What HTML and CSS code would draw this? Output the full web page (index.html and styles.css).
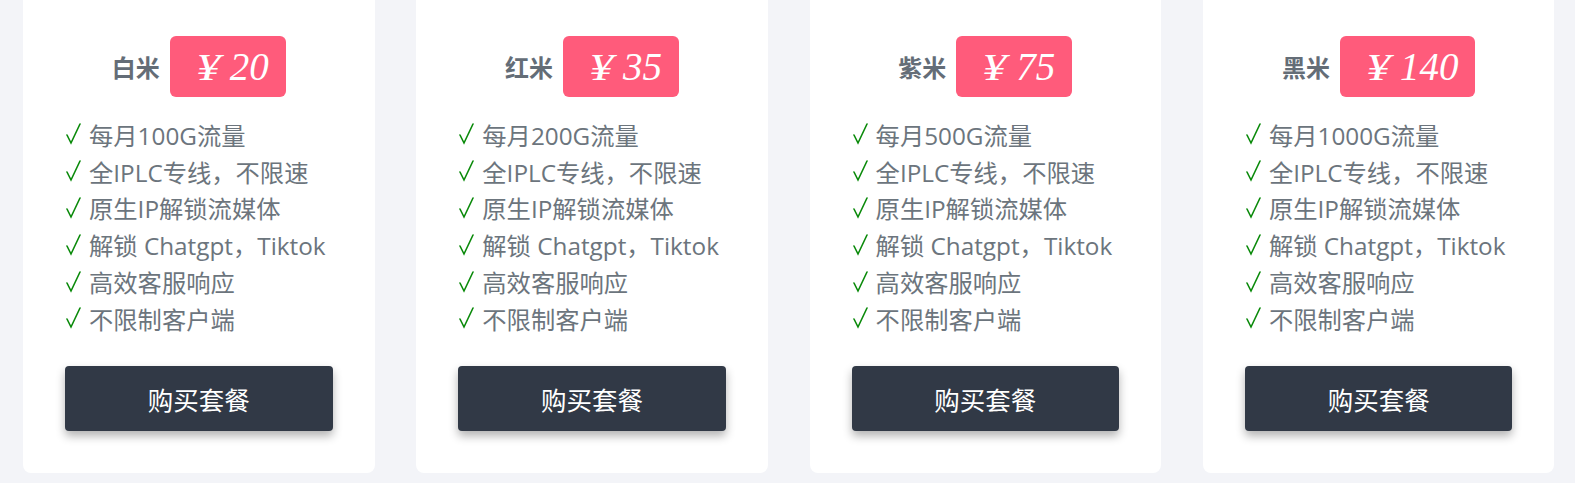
FILE: index.html
```html
<!DOCTYPE html>
<html lang="zh-CN">
<head>
<meta charset="utf-8">
<title>套餐</title>
<link rel="stylesheet" href="styles.css">
</head>
<body>
<main class="plans">
  <section class="card">
    <div class="head"><h3 class="name">白米</h3><div class="price"><span class="yen">¥</span>20</div></div>
    <ul class="features">
      <li><svg class="check" viewBox="0 0 15 22"><polyline points="1,12 5,20 14,1"/></svg>每月100G流量</li>
      <li><svg class="check" viewBox="0 0 15 22"><polyline points="1,12 5,20 14,1"/></svg>全IPLC专线，不限速</li>
      <li><svg class="check" viewBox="0 0 15 22"><polyline points="1,12 5,20 14,1"/></svg>原生IP解锁流媒体</li>
      <li><svg class="check" viewBox="0 0 15 22"><polyline points="1,12 5,20 14,1"/></svg>解锁 Chatgpt，Tiktok</li>
      <li><svg class="check" viewBox="0 0 15 22"><polyline points="1,12 5,20 14,1"/></svg>高效客服响应</li>
      <li><svg class="check" viewBox="0 0 15 22"><polyline points="1,12 5,20 14,1"/></svg>不限制客户端</li>
    </ul>
    <button class="buy">购买套餐</button>
  </section>
  <section class="card">
    <div class="head"><h3 class="name">红米</h3><div class="price"><span class="yen">¥</span>35</div></div>
    <ul class="features">
      <li><svg class="check" viewBox="0 0 15 22"><polyline points="1,12 5,20 14,1"/></svg>每月200G流量</li>
      <li><svg class="check" viewBox="0 0 15 22"><polyline points="1,12 5,20 14,1"/></svg>全IPLC专线，不限速</li>
      <li><svg class="check" viewBox="0 0 15 22"><polyline points="1,12 5,20 14,1"/></svg>原生IP解锁流媒体</li>
      <li><svg class="check" viewBox="0 0 15 22"><polyline points="1,12 5,20 14,1"/></svg>解锁 Chatgpt，Tiktok</li>
      <li><svg class="check" viewBox="0 0 15 22"><polyline points="1,12 5,20 14,1"/></svg>高效客服响应</li>
      <li><svg class="check" viewBox="0 0 15 22"><polyline points="1,12 5,20 14,1"/></svg>不限制客户端</li>
    </ul>
    <button class="buy">购买套餐</button>
  </section>
  <section class="card">
    <div class="head"><h3 class="name">紫米</h3><div class="price"><span class="yen">¥</span>75</div></div>
    <ul class="features">
      <li><svg class="check" viewBox="0 0 15 22"><polyline points="1,12 5,20 14,1"/></svg>每月500G流量</li>
      <li><svg class="check" viewBox="0 0 15 22"><polyline points="1,12 5,20 14,1"/></svg>全IPLC专线，不限速</li>
      <li><svg class="check" viewBox="0 0 15 22"><polyline points="1,12 5,20 14,1"/></svg>原生IP解锁流媒体</li>
      <li><svg class="check" viewBox="0 0 15 22"><polyline points="1,12 5,20 14,1"/></svg>解锁 Chatgpt，Tiktok</li>
      <li><svg class="check" viewBox="0 0 15 22"><polyline points="1,12 5,20 14,1"/></svg>高效客服响应</li>
      <li><svg class="check" viewBox="0 0 15 22"><polyline points="1,12 5,20 14,1"/></svg>不限制客户端</li>
    </ul>
    <button class="buy">购买套餐</button>
  </section>
  <section class="card">
    <div class="head"><h3 class="name">黑米</h3><div class="price"><span class="yen">¥</span>140</div></div>
    <ul class="features">
      <li><svg class="check" viewBox="0 0 15 22"><polyline points="1,12 5,20 14,1"/></svg>每月1000G流量</li>
      <li><svg class="check" viewBox="0 0 15 22"><polyline points="1,12 5,20 14,1"/></svg>全IPLC专线，不限速</li>
      <li><svg class="check" viewBox="0 0 15 22"><polyline points="1,12 5,20 14,1"/></svg>原生IP解锁流媒体</li>
      <li><svg class="check" viewBox="0 0 15 22"><polyline points="1,12 5,20 14,1"/></svg>解锁 Chatgpt，Tiktok</li>
      <li><svg class="check" viewBox="0 0 15 22"><polyline points="1,12 5,20 14,1"/></svg>高效客服响应</li>
      <li><svg class="check" viewBox="0 0 15 22"><polyline points="1,12 5,20 14,1"/></svg>不限制客户端</li>
    </ul>
    <button class="buy">购买套餐</button>
  </section>
</main>
</body>
</html>
```
FILE: styles.css
```css
html, body {
  margin: 0;
  padding: 0;
  background: #f3f4f8;
  overflow: hidden;
}
body {
  font-family: "Open Sans", "Noto Sans CJK SC", sans-serif;
  color: #6c757d;
}
.plans {
  display: grid;
  grid-template-columns: repeat(4, 351.5px);
  column-gap: 41.8px;
  padding-left: 23px;
  margin-top: -20px;
}
.card {
  background: #fff;
  border-radius: 8px;
  padding: 56px 42px 42px 42px;
  display: flex;
  flex-direction: column;
}
.head {
  display: flex;
  justify-content: center;
  align-items: center;
  gap: 10px;
}
.name {
  margin: 0;
  font-family: "Noto Sans CJK SC", sans-serif;
  font-weight: 700;
  font-size: 24px;
  line-height: 30px;
  color: #646d77;
}
.price {
  background: #ff5b7b;
  border-radius: 6px;
  height: 61px;
  padding: 0 17px 0 26px;
  display: flex;
  align-items: center;
  font-family: "Liberation Serif", serif;
  font-style: italic;
  font-size: 39px;
  color: #fff;
}
.yen {
  display: inline-block;
  width: 34px;
  font-family: "Liberation Serif", serif;
  font-size: 38px;
  transform: scaleX(1.3);
  transform-origin: left center;
}
.features {
  list-style: none;
  margin: 19px 0 29px 1px;
  padding: 0;
  font-size: 24.3px;
  color: #6c757d;
  white-space: nowrap;
}
.features li {
  display: flex;
  align-items: center;
  height: 36.8px;
}
.check {
  width: 15px;
  height: 22px;
  margin-right: 8px;
  fill: none;
  stroke: #0a8a0a;
  stroke-width: 1.6;
  stroke-linecap: round;
  stroke-linejoin: miter;
}
.buy {
  height: 65px;
  border: 0;
  border-radius: 4px;
  background: #313946;
  color: #fff;
  font-family: "Noto Sans CJK SC", sans-serif;
  font-size: 25.5px;
  box-shadow: 0 5px 10px rgba(0, 0, 0, 0.3);
  cursor: pointer;
}
```
